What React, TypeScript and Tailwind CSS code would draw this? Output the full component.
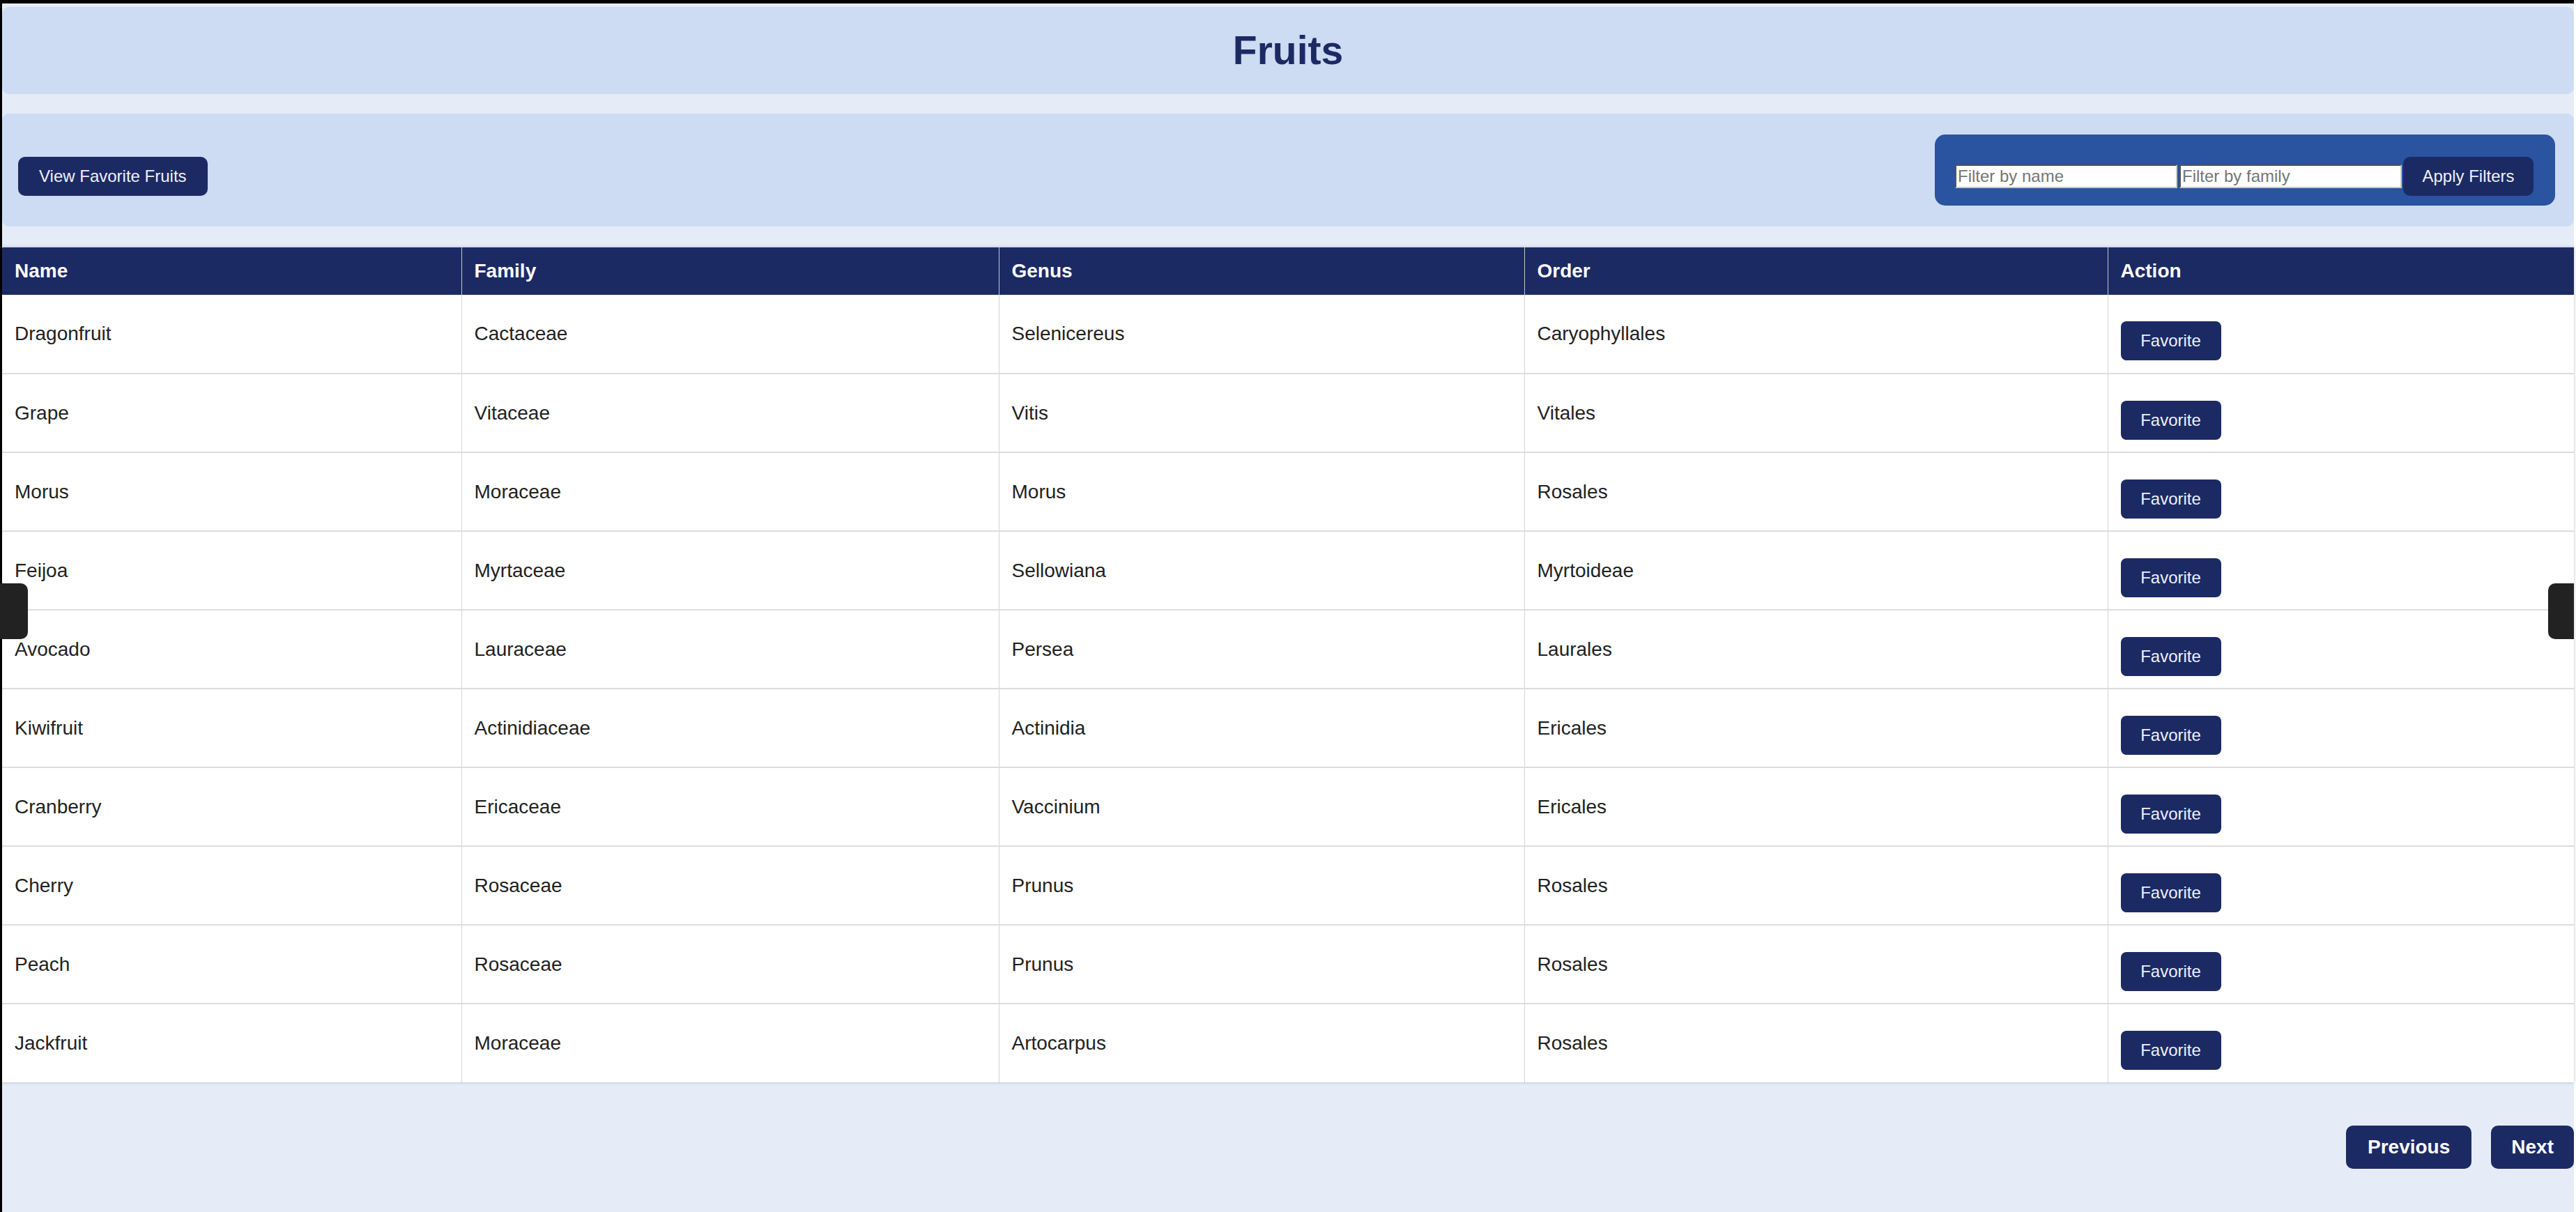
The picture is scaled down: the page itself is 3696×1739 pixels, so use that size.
import React from "react";

const fruits = [
  ["Dragonfruit", "Cactaceae", "Selenicereus", "Caryophyllales"],
  ["Grape", "Vitaceae", "Vitis", "Vitales"],
  ["Morus", "Moraceae", "Morus", "Rosales"],
  ["Feijoa", "Myrtaceae", "Sellowiana", "Myrtoideae"],
  ["Avocado", "Lauraceae", "Persea", "Laurales"],
  ["Kiwifruit", "Actinidiaceae", "Actinidia", "Ericales"],
  ["Cranberry", "Ericaceae", "Vaccinium", "Ericales"],
  ["Cherry", "Rosaceae", "Prunus", "Rosales"],
  ["Peach", "Rosaceae", "Prunus", "Rosales"],
  ["Jackfruit", "Moraceae", "Artocarpus", "Rosales"],
];

const headers = ["Name", "Family", "Genus", "Order", "Action"];

export default function App() {
  return (
    <div
      className="relative w-full h-[1739px] bg-white overflow-hidden"
      style={{ fontFamily: '"Liberation Sans", Arial, sans-serif' }}
    >
      <div className="h-full mr-[3px] border-t-[5px] border-l-[3px] border-black bg-[#e5ecf8] pt-[5px] flex flex-col">
        {/* Title band */}
        <header className="h-[125px] shrink-0 rounded-[10px] bg-[#cddbf3] flex items-center justify-center">
          <h1 className="text-[57px] font-bold text-[#1c2a64] leading-none">Fruits</h1>
        </header>

        {/* Toolbar */}
        <div className="mt-[28px] h-[162px] shrink-0 rounded-[10px] bg-[#cddbf3] flex items-center justify-between pl-[23px] pr-[27px]">
          <button className="mt-[18px] h-[56px] px-[30px] rounded-[10px] bg-[#1c2a64] text-[24px] text-[#eef0f8] leading-none">
            View Favorite Fruits
          </button>
          <div className="h-[102px] rounded-[15px] bg-[#2a53a0] flex items-center pt-[18px] pl-[29px] pr-[31px]">
            <input
              placeholder="Filter by name"
              className="w-[319px] h-[34px] bg-white border-2 border-[#767676] border-t-[#555] border-l-[#555] border-b-[#c8c8c8] border-r-[#c8c8c8] px-[2px] text-[24px] text-[#222] placeholder:text-[#767676] outline-none"
            />
            <input
              placeholder="Filter by family"
              className="ml-[3px] w-[319px] h-[34px] bg-white border-2 border-[#767676] border-t-[#555] border-l-[#555] border-b-[#c8c8c8] border-r-[#c8c8c8] px-[2px] text-[24px] text-[#222] placeholder:text-[#767676] outline-none"
            />
            <button className="ml-[2px] h-[56px] w-[187px] rounded-[10px] bg-[#1c2a64] text-[24px] text-[#eef0f8] leading-none">
              Apply Filters
            </button>
          </div>
        </div>

        {/* Table */}
        <div className="mt-[30px] shrink-0 bg-white shadow-[0_0_4px_rgba(0,0,0,0.25)]">
          <table className="w-full table-fixed border-collapse text-[28px] text-[#222]">
            <colgroup>
              <col className="w-[659px]" />
              <col className="w-[771px]" />
              <col className="w-[754px]" />
              <col className="w-[837px]" />
              <col className="w-[669px]" />
            </colgroup>
            <thead>
              <tr className="bg-[#1c2a64] h-[68px]">
                {headers.map((h, i) => (
                  <th
                    key={h}
                    className={`text-left font-bold text-white px-[18px] align-middle ${
                      i > 0 ? "border-l border-[#c4c6cf]" : ""
                    }`}
                  >
                    {h}
                  </th>
                ))}
              </tr>
            </thead>
            <tbody>
              {fruits.map((row, r) => (
                <tr
                  key={r}
                  className={`h-[113px] ${r < fruits.length - 1 ? "border-b-2 border-[#dddddd]" : ""}`}
                >
                  {row.map((cell, i) => (
                    <td
                      key={i}
                      className={`px-[18px] align-middle ${i > 0 ? "border-l border-[#d4d4d4]" : ""}`}
                    >
                      {cell}
                    </td>
                  ))}
                  <td className="px-[18px] align-middle border-l border-[#d4d4d4]">
                    <button className="mt-[20px] h-[56px] w-[144px] rounded-[8px] bg-[#1c2a64] text-[24px] text-[#eef0f8] leading-none">
                      Favorite
                    </button>
                  </td>
                </tr>
              ))}
            </tbody>
          </table>
        </div>

        {/* Pagination */}
        <div className="mt-[62px] flex justify-end gap-[28px]">
          <button className="h-[62px] px-[31px] rounded-[10px] bg-[#1c2a64] text-[28px] font-bold text-white leading-none">
            Previous
          </button>
          <button className="h-[62px] px-[29px] rounded-[10px] bg-[#1c2a64] text-[28px] font-bold text-white leading-none">
            Next
          </button>
        </div>
      </div>

      {/* Side overlay tabs */}
      <div className="absolute left-0 top-[837px] w-[40px] h-[80px] rounded-r-[10px] bg-[#222222]" />
      <div className="absolute right-[3px] top-[837px] w-[37px] h-[80px] rounded-l-[10px] bg-[#222222]" />
    </div>
  );
}
